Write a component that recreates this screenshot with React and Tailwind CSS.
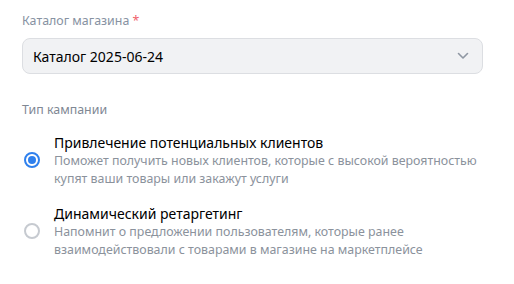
import { useState } from "react";

const options = [
  {
    id: "leads",
    title: "Привлечение потенциальных клиентов",
    desc: "Поможет получить новых клиентов, которые с высокой вероятностью купят ваши товары или закажут услуги",
  },
  {
    id: "retarget",
    title: "Динамический ретаргетинг",
    desc: "Напомнит о предложении пользователям, которые ранее взаимодействовали с товарами в магазине на маркетплейсе",
  },
];

export default function App() {
  const [type, setType] = useState("leads");

  return (
    <div className="w-[514px] h-[284px] bg-white px-[22px] pt-[12px] font-['Noto_Sans','Open_Sans',sans-serif]">
      <label className="block text-[12.4px] leading-[17px] text-[#8792a2]">
        Каталог магазина <span className="text-[#f0616b]">*</span>
      </label>
      <button className="mt-[9px] w-[461px] h-[36px] flex items-center justify-between rounded-[8px] border border-[#dcdee2] bg-[#f1f2f4] pl-[10px] pr-[13px]">
        <span className="text-[14px] text-black">Каталог 2025-06-24</span>
        <svg width="12" height="8" viewBox="0 0 12 8" fill="none">
          <path d="M1.5 1.5 6 6l4.5-4.5" stroke="#8f97a3" strokeWidth="1.6" strokeLinecap="round" strokeLinejoin="round" />
        </svg>
      </button>

      <div className="mt-[28px] text-[12.4px] leading-[16px] text-[#7f8894]">Тип кампании</div>

      <div className="mt-[16px] flex flex-col gap-[17px]">
        {options.map((o) => {
          const active = type === o.id;
          return (
            <div key={o.id} onClick={() => setType(o.id)} className="flex items-center cursor-pointer">
              <div className="w-[32px] shrink-0 flex items-center">
                {active ? (
                  <span className="ml-[2px] -mt-[2px] w-[16px] h-[16px] rounded-full border-[2px] border-[#2f80ed] flex items-center justify-center">
                    <span className="w-[8px] h-[8px] rounded-full bg-[#2f80ed]" />
                  </span>
                ) : (
                  <span className="ml-[2px] -mt-[2px] w-[16px] h-[16px] rounded-full border-[2px] border-[#c6cad0]" />
                )}
              </div>
              <div>
                <div className="text-[14px] leading-[18px] text-black">{o.title}</div>
                <div className="text-[12.4px] leading-[18px] text-[#8b929c] w-[440px]">{o.desc}</div>
              </div>
            </div>
          );
        })}
      </div>
    </div>
  );
}
